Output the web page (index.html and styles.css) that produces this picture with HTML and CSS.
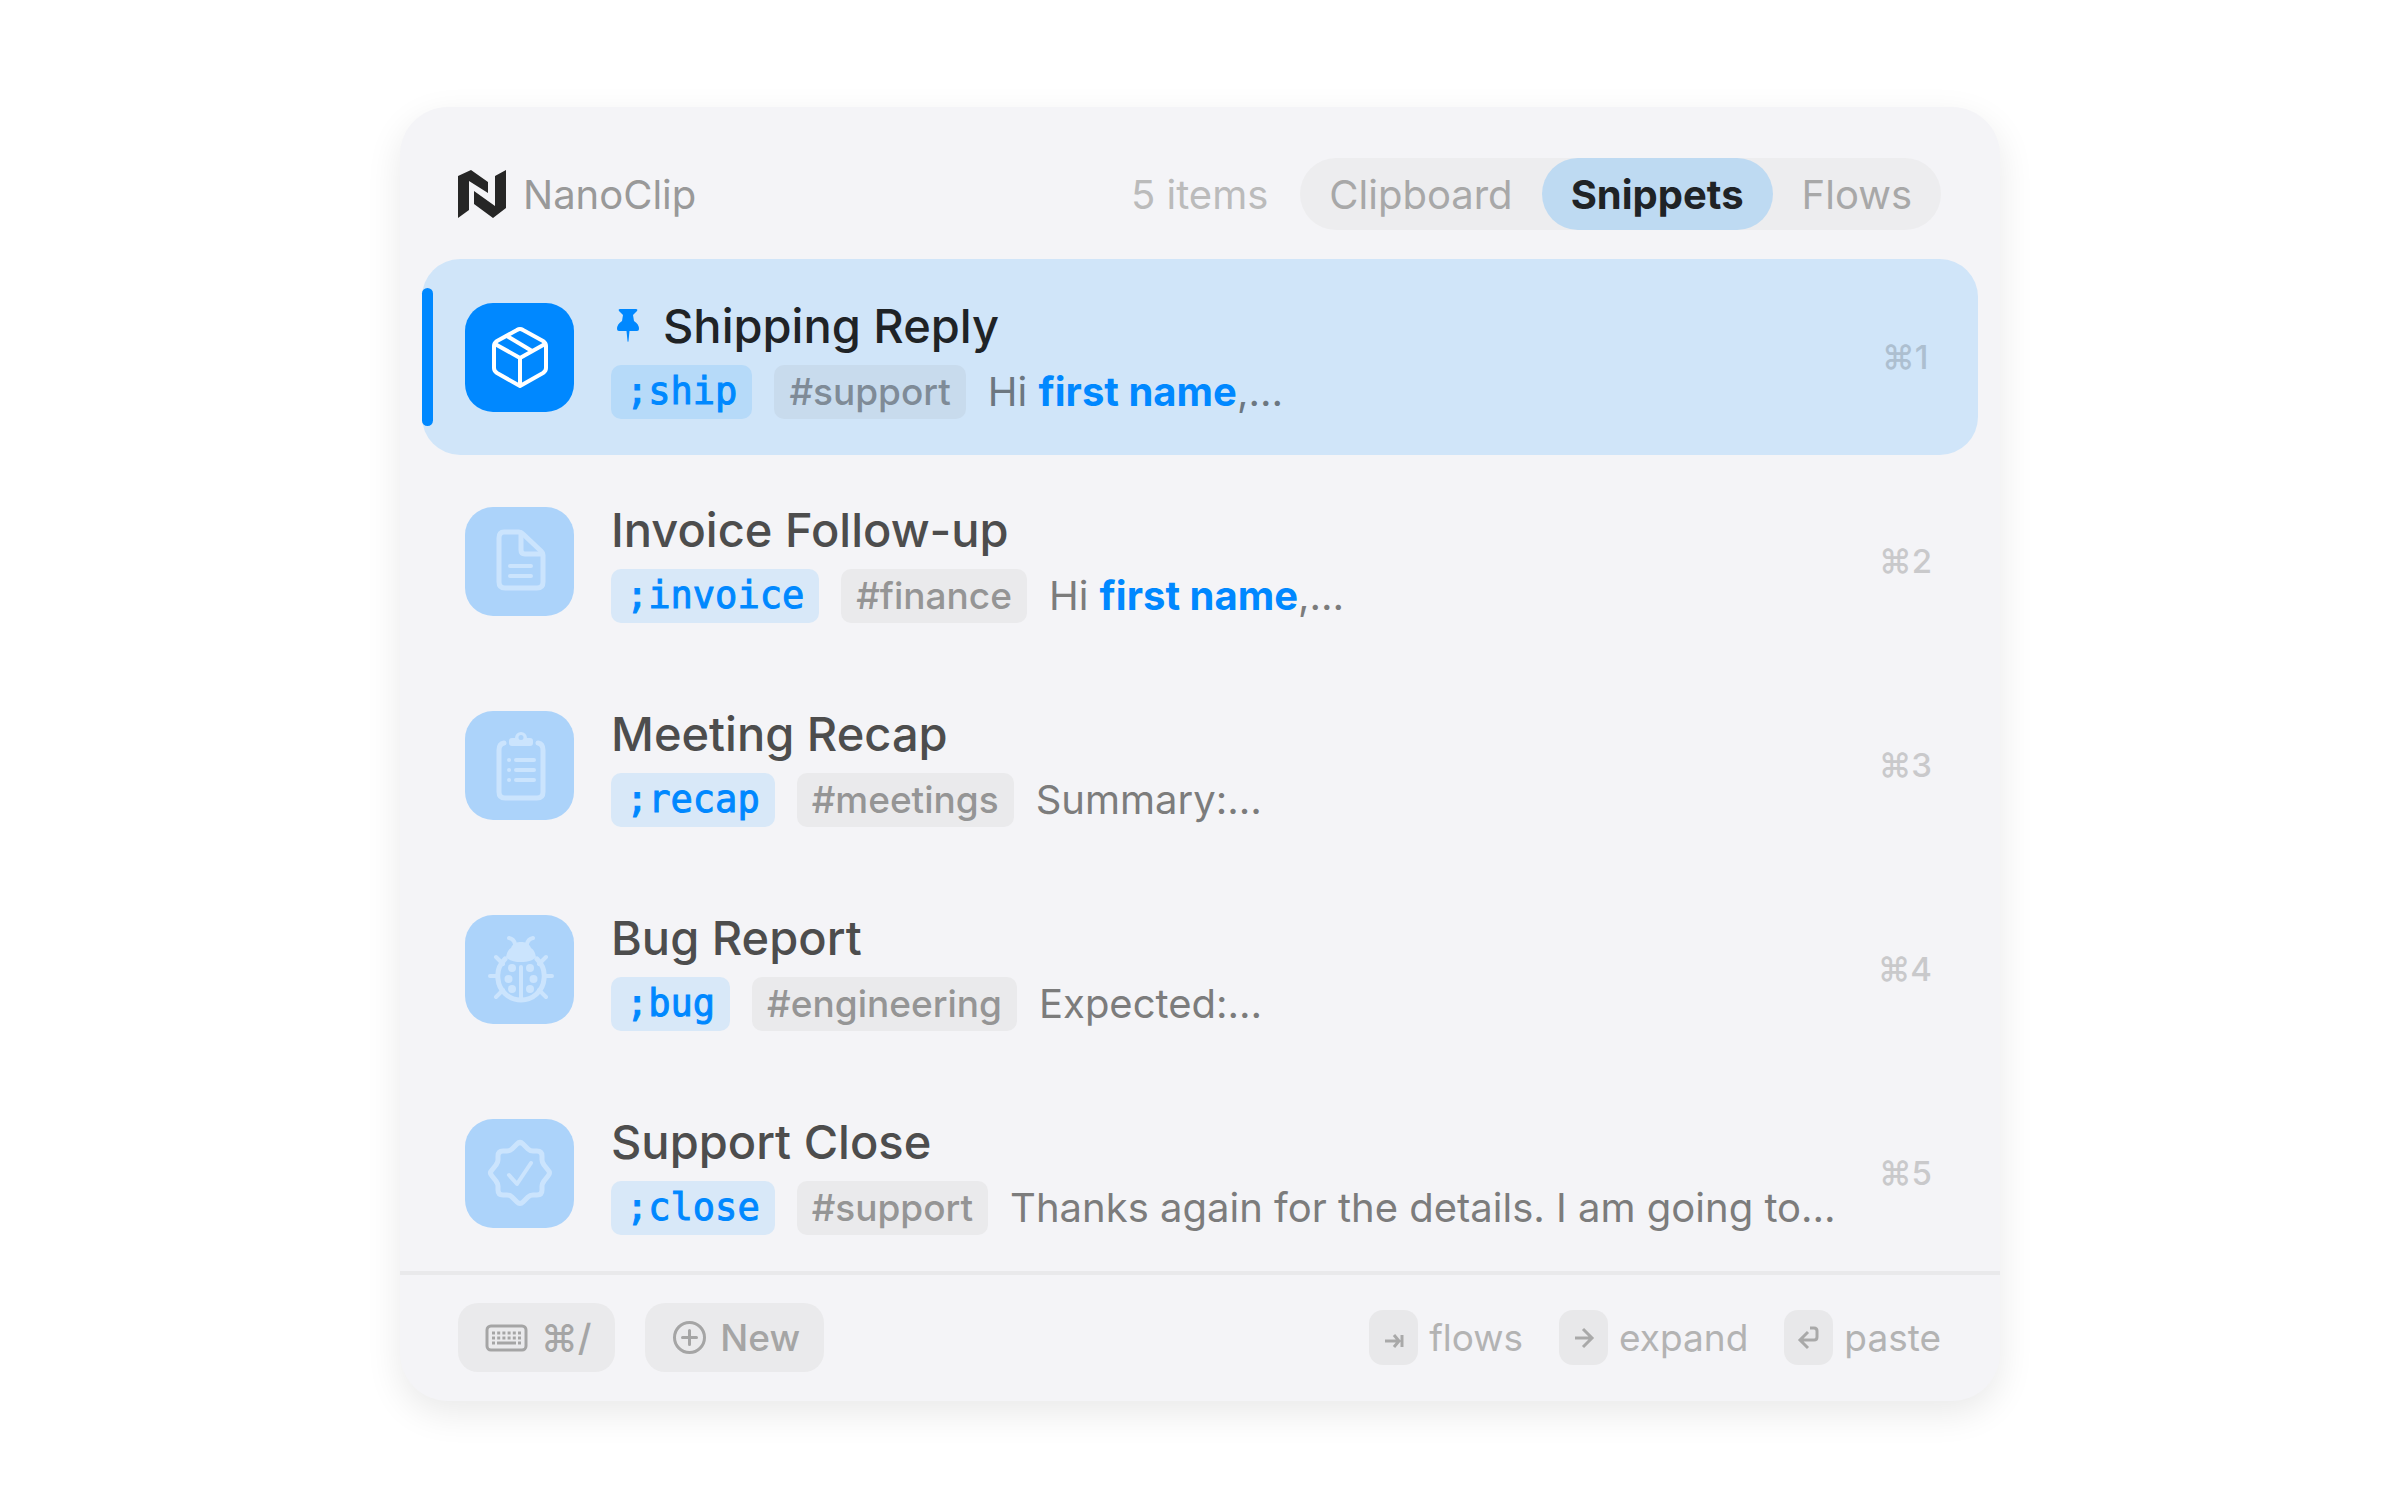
FILE: index.html
```html
<!DOCTYPE html>
<html lang="en">
<head>
<meta charset="utf-8">
<title>NanoClip</title>
<link rel="stylesheet" href="styles.css">
</head>
<body>
<main class="panel">

  <header class="top">
    <svg class="logo" viewBox="0 0 48 48">
      <path d="M0 6 13 0 30 12V23L11 11V40L0 48Z"/>
      <path d="M48 0V38L35 48 16 34V21L37 36V6Z"/>
    </svg>
    <h1 class="brand">NanoClip</h1>
    <span class="count">5 items</span>
    <nav class="tabs">
      <button class="tab" type="button">Clipboard</button>
      <button class="tab active" type="button">Snippets</button>
      <button class="tab" type="button">Flows</button>
    </nav>
  </header>

  <ul class="list">
    <li class="row selected">
      <span class="tile">
        <svg class="icon" viewBox="0 0 66 66">
          <path d="M30 6Q33 4 36 6L56 17Q59 19 59 22V44Q59 47 56 49L33 62 10 49Q7 47 7 44V22Q7 19 10 17Z"/>
          <path d="M8 20 33 34 58 20M33 34V61M20 12 45 27"/>
        </svg>
      </span>
      <div class="body">
        <h2 class="title">
          <svg class="pin" viewBox="0 0 22 33"><path d="M3 0H19Q21 0 20 2L16 6 17 12Q22 15 22 20 22 22 20 22H12.500L11.500 32Q11 34 10.500 32L9.500 22H2Q0 22 0 20 0 15 5 12L6 6 2 2Q1 0 3 0Z"/></svg>
          Shipping Reply
        </h2>
        <div class="meta">
          <code class="trigger">;ship</code>
          <span class="tag">#support</span>
          <span class="preview">Hi <b>first name</b>,…</span>
        </div>
      </div>
      <kbd class="shortcut">⌘1</kbd>
    </li>

    <li class="row">
      <span class="tile">
        <svg class="icon" viewBox="0 0 66 66">
          <path d="M17 4H32Q34 4 36 6L54 23Q56 25 56 27V54Q56 60 50 60H18Q12 60 12 54V10Q12 4 17 4Z"/>
          <path d="M34 5V22Q34 26 38 26H55"/>
          <path class="thin" d="M23 38H44M23 48H44"/>
        </svg>
      </span>
      <div class="body">
        <h2 class="title">Invoice Follow-up</h2>
        <div class="meta">
          <code class="trigger">;invoice</code>
          <span class="tag">#finance</span>
          <span class="preview">Hi <b>first name</b>,…</span>
        </div>
      </div>
      <kbd class="shortcut">⌘2</kbd>
    </li>

    <li class="row">
      <span class="tile">
        <svg class="icon" viewBox="0 0 66 66">
          <path d="M17 11Q12 12 12 18V60Q12 66 18 66H50Q56 66 56 60V18Q56 12 51 11"/>
          <path class="thin" d="M29 28H47M29 38H47M29 48H47M22 28H22.100M22 38H22.100M22 48H22.100"/>
          <path class="solid" fill-rule="evenodd" d="M25 6H28A6 6 0 0 1 40 6H43Q46 6 46 9V11Q46 14 43 14H25Q22 14 22 11V9Q22 6 25 6ZM34 3A2.500 2.500 0 1 0 34 8 2.500 2.500 0 1 0 34 3Z"/>
        </svg>
      </span>
      <div class="body">
        <h2 class="title">Meeting Recap</h2>
        <div class="meta">
          <code class="trigger">;recap</code>
          <span class="tag">#meetings</span>
          <span class="preview">Summary:…</span>
        </div>
      </div>
      <kbd class="shortcut">⌘3</kbd>
    </li>

    <li class="row">
      <span class="tile">
        <svg class="icon" viewBox="0 0 66 66">
          <path d="M18 23C12 29 10 36 11 43 12 55 22 64 34 64S56 55 57 43C58 36 56 29 50 23"/>
          <path class="thin" d="M22 2Q27 3 28 8M46 2Q41 3 40 8M9 21 16 28M59 21 52 28M3 40H11M57 40H65M9 61 16 54M59 61 52 54M34 31V63"/>
          <path class="solid" d="M19 21C20 16 21 14 24 12 26 7 30 6 34 6S42 7 44 12C47 14 48 16 49 21 47 24 41 26 34 26S21 24 19 21Z"/>
          <g class="solid"><circle cx="25" cy="32" r="4"/><circle cx="43" cy="32" r="4"/><circle cx="21.500" cy="43" r="4"/><circle cx="46.500" cy="43" r="4"/><circle cx="25" cy="53" r="4"/><circle cx="43" cy="53" r="4"/></g>
        </svg>
      </span>
      <div class="body">
        <h2 class="title">Bug Report</h2>
        <div class="meta">
          <code class="trigger">;bug</code>
          <span class="tag">#engineering</span>
          <span class="preview">Expected:…</span>
        </div>
      </div>
      <kbd class="shortcut">⌘4</kbd>
    </li>

    <li class="row">
      <span class="tile">
        <svg class="icon" viewBox="0 0 66 66">
          <path d="M30 4Q33 1 36 4L41 9Q43 11 46 11H50Q55 11 55 16V20Q55 22 57 25L61 30Q64 33 61 36L57 41Q55 44 55 46V50Q55 55 50 55H46Q43 55 41 57L36 62Q33 65 30 62L25 57Q23 55 20 55H16Q11 55 11 50V46Q11 44 9 41L5 36Q2 33 5 30L9 25Q11 22 11 20V16Q11 11 16 11H20Q23 11 25 9Z"/>
          <path class="thin" d="M22 35 30 44 44 23"/>
        </svg>
      </span>
      <div class="body">
        <h2 class="title">Support Close</h2>
        <div class="meta">
          <code class="trigger">;close</code>
          <span class="tag">#support</span>
          <span class="preview">Thanks again for the details. I am going to…</span>
        </div>
      </div>
      <kbd class="shortcut">⌘5</kbd>
    </li>
  </ul>

  <footer class="bottom">
    <button class="action" type="button">
      <svg class="keyboard" viewBox="0 0 41 26">
        <rect x="1" y="1" width="39" height="24" rx="4"/>
        <path d="M6 8H35M6 13H35" stroke-dasharray="3 2.200"/>
        <path d="M6 18H9M11 18H30M32 18H35"/>
      </svg>
      ⌘/
    </button>
    <button class="action" type="button">
      <svg class="plus" viewBox="0 0 33 33"><circle cx="16.500" cy="16.500" r="15"/><path d="M16.500 9.500V23.500M9.500 16.500H23.500"/></svg>
      New
    </button>
    <div class="hints">
      <span class="hint"><kbd class="key"><svg viewBox="0 0 20 20"><path d="M1 13H15M10 7 15 13 10 19M18 7V19"/></svg></kbd>flows</span>
      <span class="hint"><kbd class="key"><svg viewBox="0 0 20 20"><path d="M1 10H18M9 1 18 10 9 19"/></svg></kbd>expand</span>
      <span class="hint"><kbd class="key"><svg viewBox="0 0 20 20"><path d="M11 0H15Q18 0 18 3V9Q18 12 15 12H2M9 4 1 12 9 20"/></svg></kbd>paste</span>
    </div>
  </footer>

</main>
</body>
</html>
```
FILE: styles.css
```css
* {
    box-sizing: border-box;
}
body {
    margin: 0;
    padding: 107px 24px 99px;
    background: #fff;
    font-family: Inter, "Liberation Sans", sans-serif;
    color: #4d4d4d;
}
h1, h2, ul {
    margin: 0;
    padding: 0;
    font-weight: 400;
}
button, kbd {
    border: 0;
    background: none;
    font-family: inherit;
    color: inherit;
}
svg {
    display: block;
    flex: none;
    overflow: visible;
    fill: none;
    stroke: currentColor;
    stroke-linecap: round;
    stroke-linejoin: round;
}

.panel {
    max-width: 1600px;
    margin: 0 auto;
    border-radius: 48px;
    background: #f4f4f7;
    box-shadow: 0 12px 36px rgba(0, 0, 0, 0.09);
}

/* header */
.top {
    display: flex;
    align-items: center;
    padding: 51px 59px 29px 58px;
}
.logo {
    width: 48px;
    height: 48px;
    fill: #262626;
    stroke: none;
}
.brand {
    flex: 1;
    margin-left: 17px;
    font-size: 40px;
    color: #999;
}
.count {
    margin-right: 32px;
    font-size: 40px;
    color: #bbb;
}
.tabs {
    display: flex;
    border-radius: 36px;
    background: #ededef;
}
.tab {
    height: 72px;
    padding: 0 29px;
    border-radius: 36px;
    font-size: 40px;
    color: #a8a8a8;
}
.tab.active {
    background: #bedaf2;
    color: #1f2326;
    font-weight: 700;
}

/* snippets */
.list {
    display: flex;
    flex-direction: column;
    gap: 8px;
    padding: 0 22px;
    list-style: none;
}
.row {
    position: relative;
    display: flex;
    align-items: center;
    height: 196px;
    padding: 0 46px 0 43px;
    border-radius: 38px;
}
.row.selected {
    background: #d0e5f9;
}
.row.selected::before {
    content: "";
    position: absolute;
    left: 0;
    top: 29px;
    bottom: 29px;
    width: 11px;
    border-radius: 6px;
    background: #0088ff;
}
.tile {
    display: flex;
    align-items: center;
    justify-content: center;
    flex: none;
    width: 109px;
    height: 109px;
    border-radius: 28px;
    background: #acd3fa;
    color: #cbe4fd;
}
.selected .tile {
    background: #0088ff;
    color: #fff;
}
.icon {
    width: 66px;
    height: 66px;
    stroke-width: 5px;
}
.selected .icon,
.icon .thin {
    stroke-width: 4px;
}
.icon .solid {
    fill: currentColor;
    stroke: none;
}
.body {
    flex: 1;
    min-width: 0;
    margin-left: 37px;
}
.title {
    display: flex;
    align-items: center;
    gap: 24px;
    margin-bottom: 9px;
    font-size: 47px;
    line-height: 60px;
    font-weight: 500;
}
.selected .title {
    color: #1f2326;
}
.pin {
    width: 22px;
    height: 33px;
    margin-left: 6px;
    fill: #0088ff;
    stroke: none;
}
.meta {
    display: flex;
    align-items: center;
    gap: 22px;
    line-height: 54px;
}
.trigger, .tag {
    flex: none;
    padding: 0 15px;
    border-radius: 10px;
}
.trigger {
    background: #d8e8f8;
    color: #0088ff;
    font-family: "DejaVu Sans Mono", monospace;
    font-size: 37px;
    -webkit-text-stroke: 1px #0088ff;
}
.tag {
    background: #eaeaec;
    color: #959595;
    font-size: 37px;
    font-weight: 500;
}
.selected .trigger {
    background: #b6daf9;
}
.selected .tag {
    background: #c8dbed;
    color: #7f8b97;
}
.preview {
    overflow: hidden;
    white-space: nowrap;
    text-overflow: ellipsis;
    font-size: 40px;
    color: #7c7c7c;
}
.preview b {
    color: #0088ff;
    font-weight: 700;
}
.selected .preview {
    color: #6c7781;
}
.shortcut {
    min-width: 50px;
    margin-left: 24px;
    font-size: 33px;
    font-weight: 500;
    color: #c9c9cb;
}
.selected .shortcut {
    color: #adbfd0;
}

/* footer */
.bottom {
    display: flex;
    align-items: center;
    gap: 30px;
    padding: 28px 59px 29px 58px;
    border-top: 4px solid #e9e9eb;
}
.action {
    display: flex;
    align-items: center;
    gap: 14px;
    height: 69px;
    padding: 0 24px 0 28px;
    border-radius: 20px;
    background: #eaeaec;
    color: #a5a5a5;
    font-size: 37px;
    font-weight: 500;
}
.keyboard {
    width: 41px;
    height: 26px;
    stroke-width: 3px;
    stroke-linecap: butt;
}
.plus {
    width: 33px;
    height: 33px;
    stroke-width: 3px;
}
.hints {
    display: flex;
    gap: 36px;
    margin-left: auto;
}
.hint {
    display: flex;
    align-items: center;
    gap: 11px;
    font-size: 37px;
    color: #b3b3b3;
}
.key {
    display: flex;
    align-items: center;
    justify-content: center;
    width: 49px;
    height: 55px;
    border-radius: 14px;
    background: #e8e8ea;
    color: #a9a9a9;
}
.key svg {
    width: 20px;
    height: 20px;
    stroke-width: 3px;
    stroke-linecap: butt;
    stroke-linejoin: miter;
}
```
